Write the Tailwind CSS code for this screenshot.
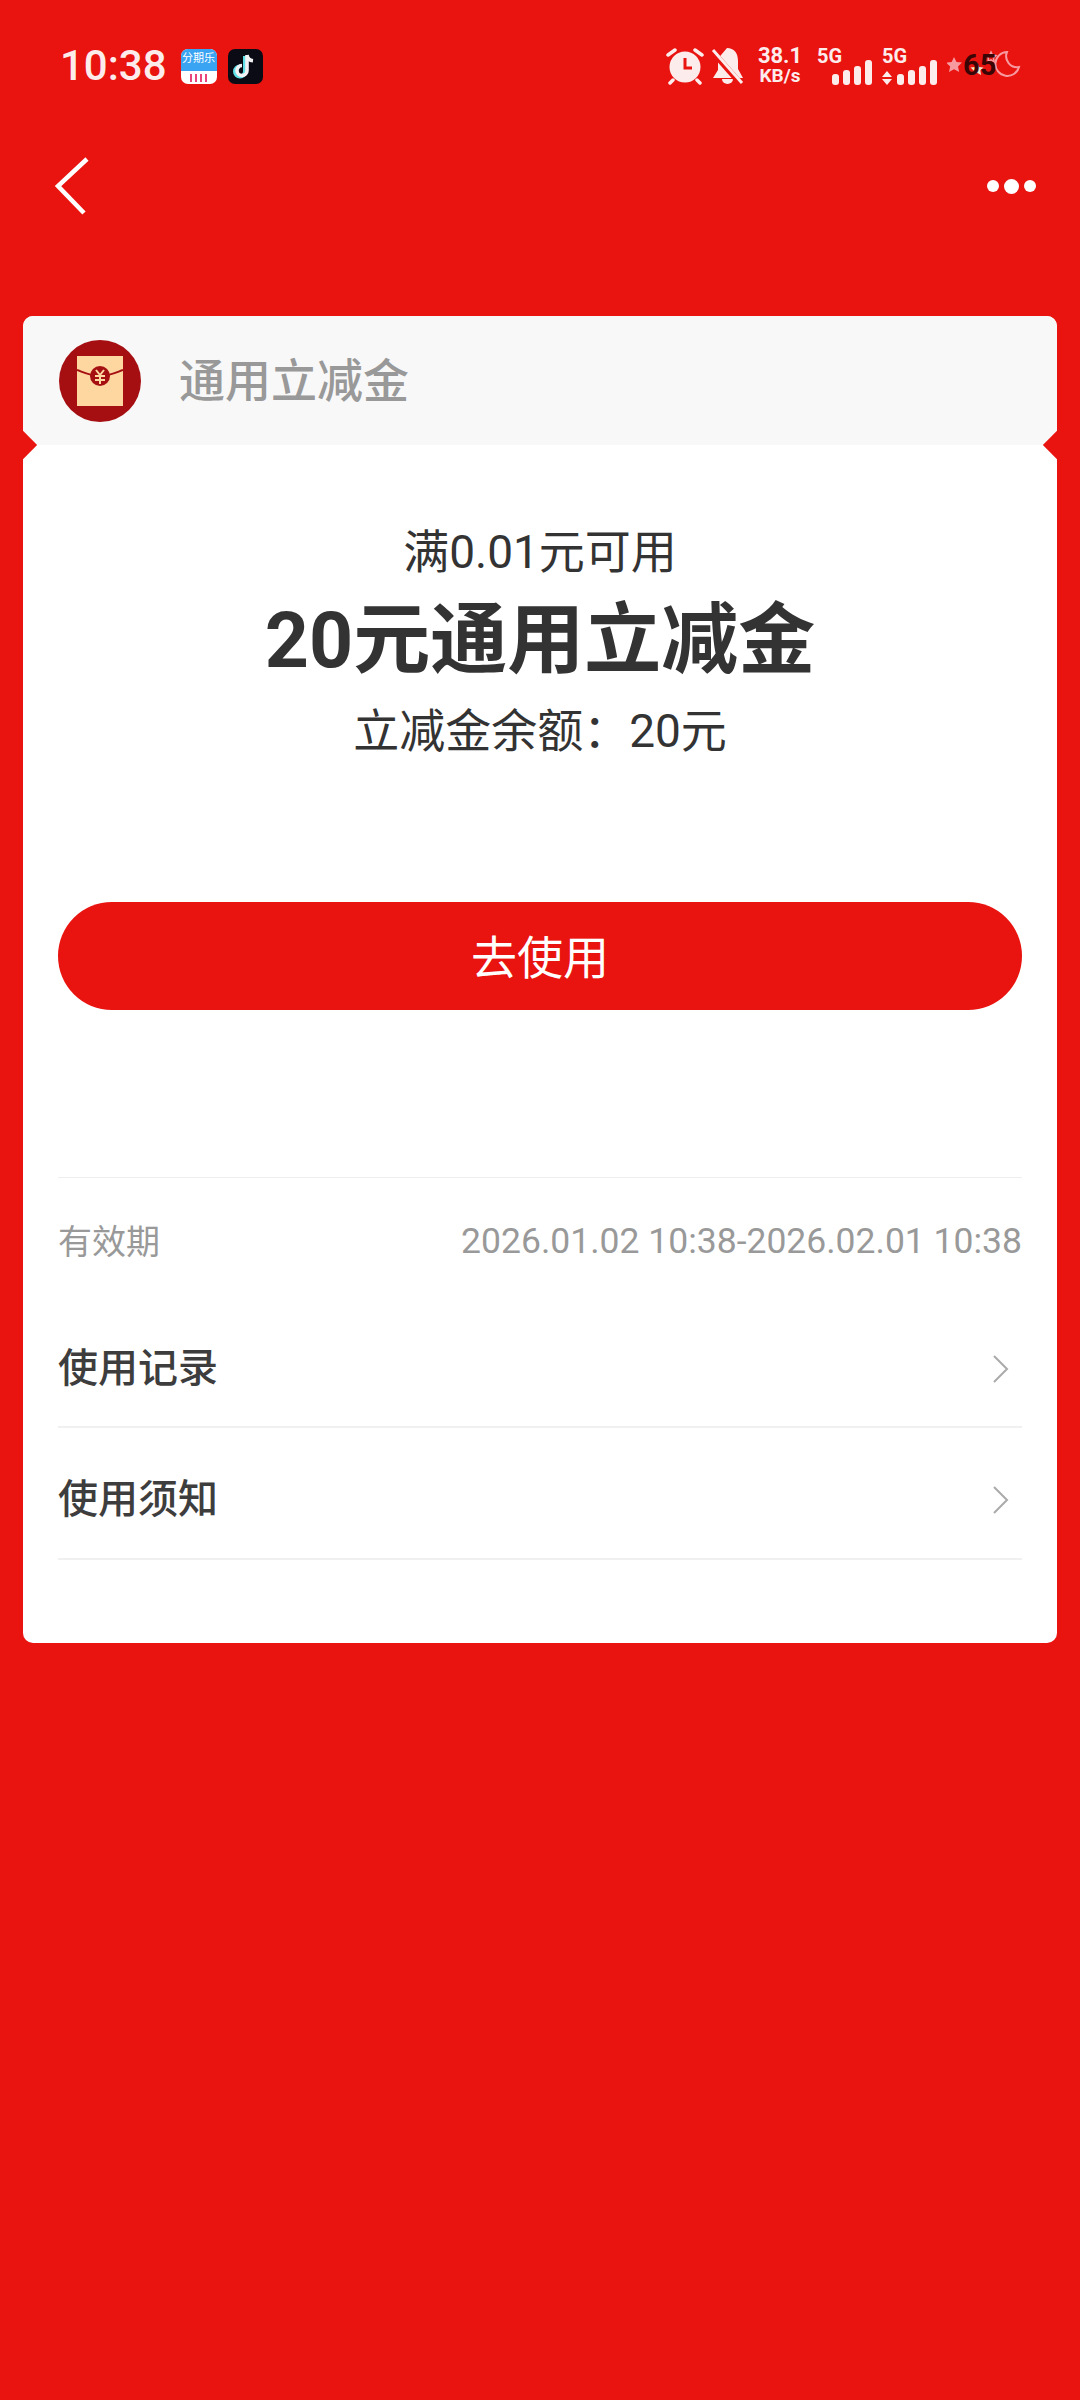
<!DOCTYPE html>
<html lang="zh-CN">
<head>
  <meta charset="UTF-8" />
  <meta name="viewport" content="width=device-width, initial-scale=1.0"/>
  <title>通用立减金</title>
  <script src="https://cdn.jsdelivr.net/npm/@tailwindcss/browser@4"></script>
</head>
<body class="bg-[#e91310] min-h-[2400px] font-['Roboto','Noto_Sans_CJK_SC',sans-serif] text-[#333]">

  <!-- Status bar -->
  <div class="h-[132px] flex items-center pl-[60px] pr-[59px] text-white">
    <span class="text-[42px] font-medium leading-none text-[#fdecec]">10:38</span>
    <div class="ml-[14px] w-[36px] h-[35px] rounded-[7px] overflow-hidden bg-white flex flex-col">
      <div class="h-[22px] bg-[#3aa3f2] text-[11px] leading-[20px] text-center text-white whitespace-nowrap">分期乐</div>
      <div class="flex-1 flex justify-center items-end gap-[3px] pb-[2px]">
        <i class="w-[2px] h-[8px] bg-[#e8457c]"></i><i class="w-[2px] h-[8px] bg-[#e8457c]"></i><i class="w-[2px] h-[8px] bg-[#e8457c]"></i><i class="w-[2px] h-[8px] bg-[#e8457c]"></i>
      </div>
    </div>
    <div class="ml-[11px] w-[35px] h-[35px] rounded-[7px] bg-[#0b0b16] flex items-center justify-center">
      <svg width="26" height="28" viewBox="0 0 26 28" fill="none">
        <path d="M13 4v15.500a5 5 0 1 1-5-5" stroke="#5fe0e6" stroke-width="4"/>
        <path d="M15 3v15.500a5 5 0 1 1-5-5M15 3c.5 3.500 3 5.500 6 5.800" stroke="#f2f2f5" stroke-width="3.600"/>
      </svg>
    </div>

    <div class="ml-auto flex items-center">
      <!-- alarm -->
      <svg width="38" height="38" viewBox="0 0 38 38">
        <circle cx="19" cy="20" r="15.500" fill="#fdecec"/>
        <path d="M19 11v10h7" fill="none" stroke="#e91310" stroke-width="3"/>
        <path d="M2 8l7-5M36 8l-7-5M7 33l-3 3M31 33l3 3" stroke="#fdecec" stroke-width="3.500" stroke-linecap="round"/>
      </svg>
      <!-- muted bell -->
      <svg class="ml-[7px]" width="33" height="38" viewBox="0 0 33 38">
        <path d="M16 1c7 0 11 5 11 13v8l5 9H2l5-8V14c0-1 .2-2 .5-3z" fill="#fdecec"/>
        <path d="M11 32h11a5.500 5 0 0 1-11 0z" fill="#fdecec"/>
        <path d="M0 3l29 33" stroke="#e91310" stroke-width="6"/>
        <path d="M2 3l29 33" stroke="#fdecec" stroke-width="3"/>
      </svg>
      <div class="ml-[13px] w-[46px] flex flex-col items-center text-[#fdecec] font-bold">
        <span class="text-[22px] leading-[20px]">38.1</span>
        <span class="text-[19px] leading-[20px]">KB/s</span>
      </div>
      <!-- sim 1 -->
      <div class="ml-[14px] relative w-[55px] h-[38px]">
        <span class="absolute left-0 top-0 text-[20px] leading-[18px] font-bold text-[#fdecec]">5G</span>
        <div class="absolute right-0 bottom-0 flex items-end gap-[4px]">
          <i class="w-[7px] h-[11px] rounded-[3px] bg-[#fdecec]"></i><i class="w-[7px] h-[15px] rounded-[3px] bg-[#fdecec]"></i><i class="w-[7px] h-[19px] rounded-[3px] bg-[#fdecec]"></i><i class="w-[7px] h-[25px] rounded-[3px] bg-[#fdecec]"></i>
        </div>
      </div>
      <!-- sim 2 -->
      <div class="ml-[10px] relative w-[55px] h-[38px]">
        <span class="absolute left-0 top-0 text-[20px] leading-[18px] font-bold text-[#fdecec]">5G</span>
        <svg class="absolute left-0 bottom-0" width="10" height="14" viewBox="0 0 10 14"><path d="M5 0l5 6H0zM5 14L0 8h10z" fill="#fdecec"/></svg>
        <div class="absolute right-0 bottom-0 flex items-end gap-[4px]">
          <i class="w-[7px] h-[11px] rounded-[3px] bg-[#fdecec]"></i><i class="w-[7px] h-[15px] rounded-[3px] bg-[#fdecec]"></i><i class="w-[7px] h-[19px] rounded-[3px] bg-[#fdecec]"></i><i class="w-[7px] h-[25px] rounded-[3px] bg-[#fdecec]"></i>
        </div>
      </div>
      <!-- battery theme: stars and moon -->
      <div class="ml-[10px] relative w-[74px] h-[38px]">
        <svg class="absolute left-0 top-0" width="74" height="38" viewBox="0 0 74 38">
          <path d="M7 10l2.500 5 5.500.6-4 3.900 1.200 5.500L7 22.300 2 25l1.200-5.500-4-3.900 5.500-.6z" fill="#f79aa0"/>
          <path d="M30 16l2 4 4.500.6-3.200 3 .8 4.400-4.100-2.200-4.100 2.200.8-4.400-3.200-3 4.500-.6z" fill="#f6e8c8"/>
          <path d="M44 5l1.500 3 3.500.5-2.500 2.500.6 3.500-3.100-1.700-3.100 1.700.6-3.500L39 8.500l3.500-.5z" fill="none" stroke="#f79aa0" stroke-width="1.500"/>
          <path d="M60 5a12 12 0 1 0 12 15 11 11 0 0 1-12-15z" fill="none" stroke="#f79aa0" stroke-width="2"/>
        </svg>
        <span class="absolute left-[16px] top-[4px] text-[29px] leading-[28px] font-bold text-[#3a0505]">65</span>
      </div>
    </div>
  </div>

  <!-- Nav -->
  <div class="h-[108px] flex items-center justify-between pl-[52px] pr-[44px]">
    <svg width="38" height="60" viewBox="0 0 38 60" fill="none"><path d="M35 3L6 30l26 27" stroke="white" stroke-width="4.500"/></svg>
    <div class="flex items-center gap-[5px]">
      <i class="w-[12px] h-[12px] rounded-full bg-white"></i>
      <i class="w-[15px] h-[15px] rounded-full bg-white"></i>
      <i class="w-[12px] h-[12px] rounded-full bg-white"></i>
    </div>
  </div>

  <!-- Card -->
  <div class="relative mt-[76px] mx-[23px] rounded-[10px] overflow-hidden bg-white">
    <div class="h-[129px] bg-[#f8f8f8] flex items-center pl-[36px]">
      <div class="w-[82px] h-[82px] rounded-full bg-[#a60f12] flex items-center justify-center">
        <svg width="46" height="50" viewBox="0 0 46 50">
          <rect width="46" height="50" fill="#fdd6a0"/>
          <path d="M0 14c8 3 14 6 23 6s15-3 23-6" fill="none" stroke="#a60f12" stroke-width="2"/>
          <circle cx="23" cy="20" r="10" fill="#a60f12"/>
          <path d="M19 14l4 5 4-5M18 20h10M18 24h10M23 19v9" fill="none" stroke="#fdd6a0" stroke-width="2"/>
        </svg>
      </div>
      <span class="ml-[38px] text-[46px] font-medium leading-none text-[#999]">通用立减金</span>
    </div>
    <!-- notches -->
    <i class="absolute left-[-10px] top-[119px] w-[20px] h-[20px] rotate-45 bg-[#e91310]"></i>
    <i class="absolute right-[-10px] top-[119px] w-[20px] h-[20px] rotate-45 bg-[#e91310]"></i>

    <div class="pt-[77px] px-[35px] text-center">
      <p class="text-[46px] leading-[60px]">满0.01元可用</p>
      <p class="mt-[9px] text-[77px] leading-[100px] font-bold">20元通用立减金</p>
      <p class="mt-[10px] text-[46px] leading-[60px]">立减金余额：20元</p>
      <button class="mt-[141px] pt-[5px] w-full h-[108px] rounded-full bg-[#e91310] text-white text-[46px]">去使用</button>
    </div>

    <div class="mt-[167px] mx-[35px] border-t border-[#eee]">
      <div class="h-[128px] flex items-center justify-between">
        <span class="text-[34px] text-[#999]">有效期</span>
        <span class="text-[35.500px] text-[#999]">2026.01.02 10:38-2026.02.01 10:38</span>
      </div>
      <div class="h-[122px] pt-[6px] flex items-center justify-between border-b-2 border-[#f0f0f0]">
        <span class="text-[40px] font-medium text-[#3d3d3d]">使用记录</span>
        <svg class="mr-[13px]" width="17" height="28" viewBox="0 0 17 28" fill="none"><path d="M2 1l13 13L2 27" stroke="#aaa" stroke-width="2"/></svg>
      </div>
      <div class="h-[132px] pt-[14px] flex items-center justify-between border-b-2 border-[#f0f0f0]">
        <span class="text-[40px] font-medium text-[#3d3d3d]">使用须知</span>
        <svg class="mr-[13px]" width="17" height="28" viewBox="0 0 17 28" fill="none"><path d="M2 1l13 13L2 27" stroke="#aaa" stroke-width="2"/></svg>
      </div>
    </div>
    <div class="h-[83px]"></div>
  </div>

</body>
</html>
